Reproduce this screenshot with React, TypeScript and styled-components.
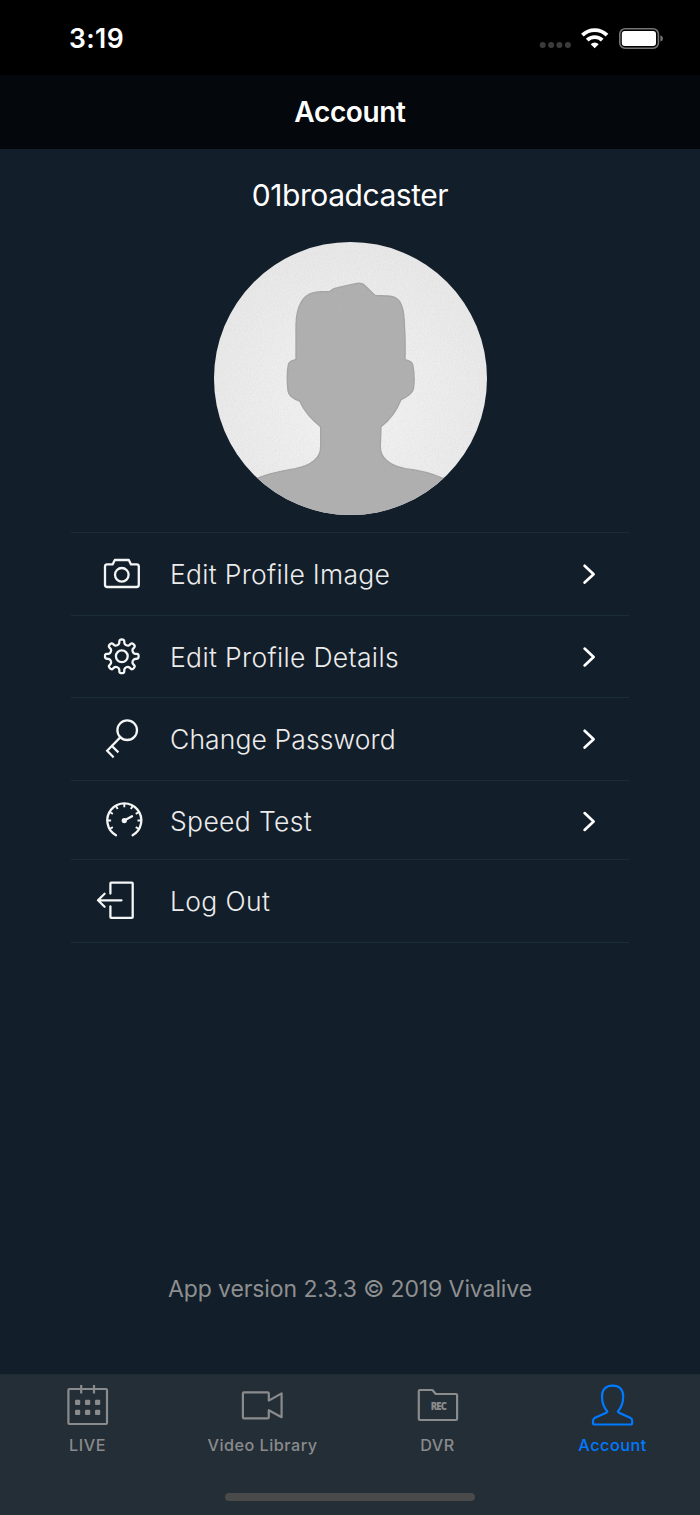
import React from "react";
import styled, { createGlobalStyle } from "styled-components";

const GlobalStyle = createGlobalStyle`
  * { box-sizing: border-box; }
  body { margin: 0; background: #121e29; }
`;

const Screen = styled.div`
  display: flex;
  flex-direction: column;
  width: 700px;
  height: 1515px;
  overflow: hidden;
  background: #121e29;
  font-family: Inter, "Liberation Sans", sans-serif;
  color: #fff;
`;

const StatusBar = styled.div`
  display: flex;
  justify-content: space-between;
  height: 75px;
  padding: 20px 30px 0 69px;
  background: #000;
`;

const Time = styled.div`
  font-size: 26.5px;
  font-weight: 600;
  line-height: 37px;
  letter-spacing: 0.4px;
`;

const Header = styled.header`
  display: flex;
  align-items: center;
  justify-content: center;
  height: 74px;
  background: #04070c;
`;

const Title = styled.h1`
  margin: 0;
  font-size: 28px;
  font-weight: 600;
  letter-spacing: -0.35px;
`;

const Main = styled.main`
  display: flex;
  flex: 1;
  flex-direction: column;
  align-items: center;
`;

const Username = styled.div`
  height: 93px;
  padding-top: 27px;
  font-size: 30px;
  line-height: 38px;
  letter-spacing: -0.45px;
`;

const Avatar = styled.svg`
  display: block;
  width: 273px;
  height: 273px;
`;

const Menu = styled.nav`
  width: 558px;
  margin-top: 17px;
  border-top: 1px solid #1b2d38;
`;

const MenuRow = styled.div<{ $height: number; $line: number }>`
  display: flex;
  height: ${(p) => p.$height}px;
  padding-left: 19px;
  border-bottom: 1px solid #1b2d38;
  line-height: ${(p) => p.$line}px;
`;

const RowIcon = styled.svg`
  flex: none;
  width: 60px;
  height: 78px;
  fill: none;
  stroke: #f4f5f5;
  stroke-width: 2.3;
  stroke-linejoin: round;
  stroke-linecap: round;
`;

const RowLabel = styled.span<{ $spacing: number }>`
  flex: 1;
  padding-left: 20px;
  font-size: 26.5px;
  font-weight: 300;
  letter-spacing: ${(p) => p.$spacing}px;
  color: #ececec;
`;

const Chevron = styled.svg`
  flex: none;
  width: 60px;
  height: 78px;
  fill: none;
  stroke: #fff;
  stroke-width: 2.7;
  stroke-linecap: round;
  stroke-linejoin: round;
`;

const Version = styled.div`
  margin-top: auto;
  margin-bottom: 69px;
  font-size: 23px;
  line-height: 32px;
  letter-spacing: -0.1px;
  color: #8e8f90;
`;

const TabBar = styled.footer`
  display: flex;
  flex-direction: column;
  align-items: center;
  height: 141px;
  background: #242e37;
  border-top: 1px solid #202c34;
`;

const Tabs = styled.div`
  display: flex;
  width: 100%;
  height: 118px;
`;

const Tab = styled.div<{ $active?: boolean }>`
  display: flex;
  flex: 1;
  flex-direction: column;
  align-items: center;
  color: ${(p) => (p.$active ? "#007aff" : "#8a8b8c")};
  font-size: 16.2px;
  font-weight: 500;
  line-height: 21px;
  letter-spacing: 0.5px;
`;

const TabIcon = styled.svg`
  width: 60px;
  height: 60px;
  fill: none;
  stroke: currentColor;
  stroke-width: 2.2;
  stroke-linejoin: round;
`;

const HomeIndicator = styled.div`
  width: 250px;
  height: 8px;
  border-radius: 4px;
  background: #4a4a4a;
`;

const polar = (cx: number, cy: number, r: number, deg: number): [number, number] => {
  const a = (deg * Math.PI) / 180;
  return [cx + r * Math.cos(a), cy + r * Math.sin(a)];
};

// Rounded cog outline: quadratic segments joined at the midpoints of the control polygon.
const cogPath = (cx: number, cy: number) => {
  const pts: [number, number][] = [];
  for (let t = 0; t < 360; t += 45) {
    pts.push(
      polar(cx, cy, 12, t - 15),
      polar(cx, cy, 13.8, t - 10),
      polar(cx, cy, 17, t - 8.5),
      polar(cx, cy, 17, t + 8.5),
      polar(cx, cy, 13.8, t + 10),
      polar(cx, cy, 12, t + 15),
    );
  }
  const mid = (a: [number, number], b: [number, number]) =>
    `${((a[0] + b[0]) / 2).toFixed(2)} ${((a[1] + b[1]) / 2).toFixed(2)}`;
  const n = pts.length;
  let d = `M${mid(pts[n - 1], pts[0])}`;
  pts.forEach((p, i) => {
    d += `Q${p[0].toFixed(2)} ${p[1].toFixed(2)} ${mid(p, pts[(i + 1) % n])}`;
  });
  return d + "Z";
};

const gaugeTicks = [-210, -180, -150, -120, -90, -60, -30, 0, 30]
  .map((deg) => {
    const a = polar(34.3, 39.5, 17, deg);
    const b = polar(34.3, 39.5, 13.2, deg);
    return `M${a.join(" ")}L${b.join(" ")}`;
  })
  .join("");

const icons = {
  camera: (
    <>
      <path d="M17.2 31.4H22.6L24.8 27H38.8L41 31.4H46.6Q48.8 31.4 48.8 33.6V51.8Q48.8 54 46.6 54H17.2Q15 54 15 51.8V33.6Q15 31.4 17.2 31.4Z" />
      <circle cx="31.8" cy="41.8" r="6.8" />
    </>
  ),
  cog: (
    <>
      <path d={cogPath(31.8, 40.3)} />
      <circle cx="31.8" cy="40.3" r="5.9" />
    </>
  ),
  key: (
    <>
      <circle cx="37.2" cy="32.2" r="9.8" />
      <path d="M30.2 39.4L17.2 52.7L22.8 58.5M21.9 48L27.6 53.6" strokeLinecap="square" strokeLinejoin="miter" />
    </>
  ),
  gauge: (
    <>
      <path d="M26 54.2A17 17 0 1 1 42.6 54.2" />
      <path d={gaugeTicks} strokeWidth="1.9" strokeLinecap="butt" />
      <circle cx="34.3" cy="39.6" r="1.5" />
      <path d="M34.3 39.6L42 35.2" />
    </>
  ),
  exit: (
    <path d="M20.4 33.6V23.4Q20.4 22.6 21.2 22.6H41.8Q42.7 22.6 42.7 23.4V57Q42.7 57.8 41.8 57.8H21.2Q20.4 57.8 20.4 57V46.4M31.5 40.3H8M14.6 33.8L8 40.3L14.6 46.8" />
  ),
};

const rows: { icon: keyof typeof icons; label: string; height: number; line: number; spacing: number; chevronY?: number }[] = [
  { icon: "camera", label: "Edit Profile Image", height: 83, line: 83, spacing: 0.29, chevronY: 41.2 },
  { icon: "cog", label: "Edit Profile Details", height: 82, line: 83, spacing: 0.34, chevronY: 41 },
  { icon: "key", label: "Change Password", height: 83, line: 83, spacing: 0.1, chevronY: 41.2 },
  { icon: "gauge", label: "Speed Test", height: 79, line: 81, spacing: 0.35, chevronY: 40.5 },
  { icon: "exit", label: "Log Out", height: 83, line: 83, spacing: 0.35 },
];

export default function App() {
  return (
    <Screen>
      <GlobalStyle />
      <StatusBar>
        <Time>3:19</Time>
        <svg width="135" height="40" viewBox="0 0 135 40">
          <g fill="#3b3b3b">
            <circle cx="7.7" cy="25" r="3" />
            <circle cx="16.1" cy="25" r="3" />
            <circle cx="24.4" cy="25" r="3" />
            <circle cx="32.9" cy="25" r="3" />
          </g>
          <g fill="none" stroke="#fff" strokeWidth="3.9">
            <path d="M47.4 15.1A17.6 17.6 0 0 1 72 15.1" />
            <path d="M52.2 20.2A10.8 10.8 0 0 1 67.2 20.2" />
          </g>
          <path d="M59.7 28.2L55.7 24.2A5.8 5.8 0 0 1 63.7 24.2Z" fill="#fff" />
          <rect x="84.8" y="8.8" width="38.6" height="19.4" rx="5.2" fill="none" stroke="#747474" strokeWidth="1.6" />
          <rect x="86.8" y="11" width="34.2" height="15" rx="3" fill="#fff" />
          <path d="M125.4 15.2Q128 16.2 128 18.5T125.4 21.8Z" fill="#747474" />
        </svg>
      </StatusBar>
      <Header>
        <Title>Account</Title>
      </Header>
      <Main>
        <Username>01broadcaster</Username>
        <Avatar viewBox="41 36 819 819">
          <defs>
            <clipPath id="disc">
              <circle cx="450.5" cy="445.5" r="409.5" />
            </clipPath>
            <radialGradient id="paper" cx="0.5" cy="0.6" r="0.65">
              <stop offset="0" stopColor="#f3f3f3" />
              <stop offset="1" stopColor="#e7e7e7" />
            </radialGradient>
            <filter id="grain" x="0" y="0" width="100%" height="100%">
              <feTurbulence type="fractalNoise" baseFrequency="0.25" numOctaves="2" seed="4" />
              <feColorMatrix values="0 0 0 0 0.3  0 0 0 0 0.3  0 0 0 0 0.3  0.4 0 0 0 -0.16" />
            </filter>
          </defs>
          <g clipPath="url(#disc)">
            <rect x="41" y="36" width="819" height="819" fill="url(#paper)" />
            <path
              d="M170 745C215 727 250 722 285 716C330 706 361 686 361 650V590C335 570 312 545 298 513C283 508 265 500 263 482C260 455 260 425 264 404C267 392 278 393 287 388V285C288 230 307 195 340 188C360 183 377 187 389 184C396 178 400 174 412 173L465 161C477 158 488 160 495 168L525 197C550 198 570 195 587 204C605 214 611 240 612 280C615 320 615 350 614 389C624 393 633 392 637 404C642 428 643 455 639 478C635 492 617 502 602 509C588 545 570 568 542 590L540 650C540 686 570 706 615 716C650 720 690 728 728 745V860H170Z"
              fill="#b0b0b0"
              stroke="#a5a5a5"
              strokeWidth="4"
            />
            <rect x="41" y="36" width="819" height="819" filter="url(#grain)" opacity="0.5" />
          </g>
        </Avatar>
        <Menu>
          {rows.map((row) => (
            <MenuRow key={row.label} $height={row.height} $line={row.line}>
              <RowIcon viewBox="0 0 60 78">{icons[row.icon]}</RowIcon>
              <RowLabel $spacing={row.spacing}>{row.label}</RowLabel>
              {row.chevronY !== undefined && (
                <Chevron viewBox="0 0 60 78">
                  <path d={`M15.6 ${row.chevronY - 8.4}L24.6 ${row.chevronY}L15.6 ${row.chevronY + 8.4}`} />
                </Chevron>
              )}
            </MenuRow>
          ))}
        </Menu>
        <Version>App version 2.3.3 © 2019 Vivalive</Version>
      </Main>
      <TabBar>
        <Tabs>
          <Tab>
            <TabIcon viewBox="0.4 0 60 60">
              <rect x="10.8" y="14" width="38.6" height="35" rx="1" />
              <path d="M23.6 10V18.4M36.4 10V18.4" />
              <g fill="currentColor" stroke="none">
                {[27.4, 37.4].map((y) =>
                  [20, 30, 40].map((x) => (
                    <rect key={`${x}-${y}`} x={x - 2.6} y={y - 2.6} width="5.2" height="5.2" rx="1" />
                  )),
                )}
              </g>
            </TabIcon>
            LIVE
          </Tab>
          <Tab>
            <TabIcon viewBox="0.4 0 60 60">
              <path d="M11.4 17.3H35Q36.2 17.3 36.2 18.5V25.6L49 18.4V42.2L36.2 35.2V42.2Q36.2 43.4 35 43.4H11.4Q10.3 43.4 10.3 42.2V18.5Q10.3 17.3 11.4 17.3Z" />
            </TabIcon>
            Video Library
          </Tab>
          <Tab>
            <TabIcon viewBox="0.4 0 60 60">
              <path d="M12.2 15H24.8L28.2 19H48.4Q49.5 19 49.5 20V44Q49.5 45 48.4 45H12.2Q11.2 45 11.2 44V16Q11.2 15 12.2 15Z" />
              <text x="30.8" y="35.2" textAnchor="middle" fill="currentColor" stroke="none" fontFamily="Open Sans" fontSize="9.6" fontWeight="800" letterSpacing="-0.9">
                REC
              </text>
            </TabIcon>
            DVR
          </Tab>
          <Tab $active>
            <TabIcon viewBox="0.4 -0.3 60 60">
              <path d="M30 10.3C36.8 10.3 40.6 14.6 40.6 21C40.6 28 39 32.2 35.2 36.2Q35.8 37.4 38 38.2L47.6 42.4Q49.6 43.4 49.6 45.4V48Q49.6 49.2 48.4 49.2H11.6Q10.4 49.2 10.4 48V45.4Q10.4 43.4 12.4 42.4L22 38.2Q24.2 37.4 24.8 36.2C21 32.2 19.4 28 19.4 21C19.4 14.6 23.2 10.3 30 10.3Z" />
            </TabIcon>
            Account
          </Tab>
        </Tabs>
        <HomeIndicator />
      </TabBar>
    </Screen>
  );
}
